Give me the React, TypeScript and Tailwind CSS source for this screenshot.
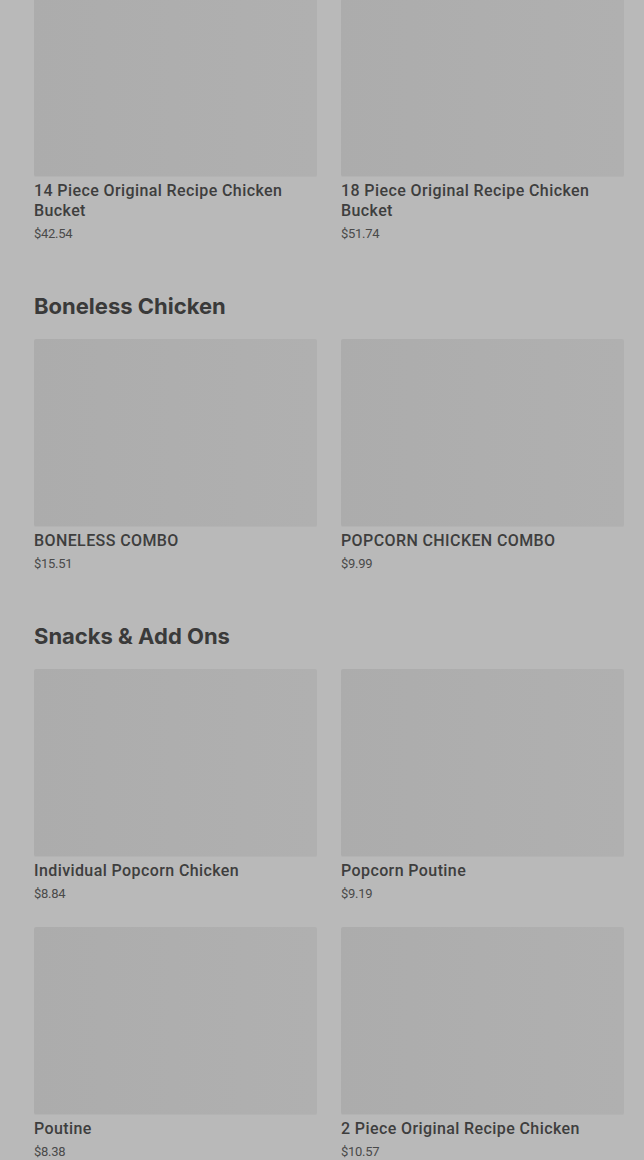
import React from "react";

interface Item {
  name: string;
  price: string;
}

interface Section {
  title?: string;
  items: Item[];
}

const sections: Section[] = [
  {
    items: [
      { name: "14 Piece Original Recipe Chicken Bucket", price: "$42.54" },
      { name: "18 Piece Original Recipe Chicken Bucket", price: "$51.74" },
    ],
  },
  {
    title: "Boneless Chicken",
    items: [
      { name: "BONELESS COMBO", price: "$15.51" },
      { name: "POPCORN CHICKEN COMBO", price: "$9.99" },
    ],
  },
  {
    title: "Snacks & Add Ons",
    items: [
      { name: "Individual Popcorn Chicken", price: "$8.84" },
      { name: "Popcorn Poutine", price: "$9.19" },
      { name: "Poutine", price: "$8.38" },
      { name: "2 Piece Original Recipe Chicken", price: "$10.57" },
    ],
  },
];

const MenuCard: React.FC<{ item: Item }> = ({ item }) => (
  <div className="flex flex-col">
    {/* Image placeholder */}
    <div className="h-[188px] w-full rounded-[2px] bg-gradient-to-r from-[#acacac] to-[#b0b0b0] border-b border-[#b3b3b3]" />
    <p className="mt-1 text-[16px] leading-[20px] font-medium tracking-[0.4px] text-[#3e3e3e] font-['Roboto',sans-serif]">
      {item.name}
    </p>
    <p className="mt-[3px] text-[13px] leading-[19px] text-[#4a4a4a] font-['Roboto',sans-serif] tracking-[-0.3px]">
      {item.price}
    </p>
  </div>
);

export default function App() {
  return (
    <div className="min-h-[1160px] w-full overflow-hidden bg-[#b9b9b9]">
      <div className="-mt-[11px] pl-[34px] pr-[20px]">
        {sections.map((section, i) => (
          <section key={i} className={i === 0 ? "" : "mt-[49px]"}>
            {section.title && (
              <h2 className="mb-[19px] text-[22px] leading-[28px] font-bold tracking-normal text-[#3a3a3a] font-['Inter',sans-serif]">
                {section.title}
              </h2>
            )}
            <div className="grid grid-cols-2 gap-x-6 gap-y-6">
              {section.items.map((item) => (
                <MenuCard key={item.name} item={item} />
              ))}
            </div>
          </section>
        ))}
      </div>
    </div>
  );
}
